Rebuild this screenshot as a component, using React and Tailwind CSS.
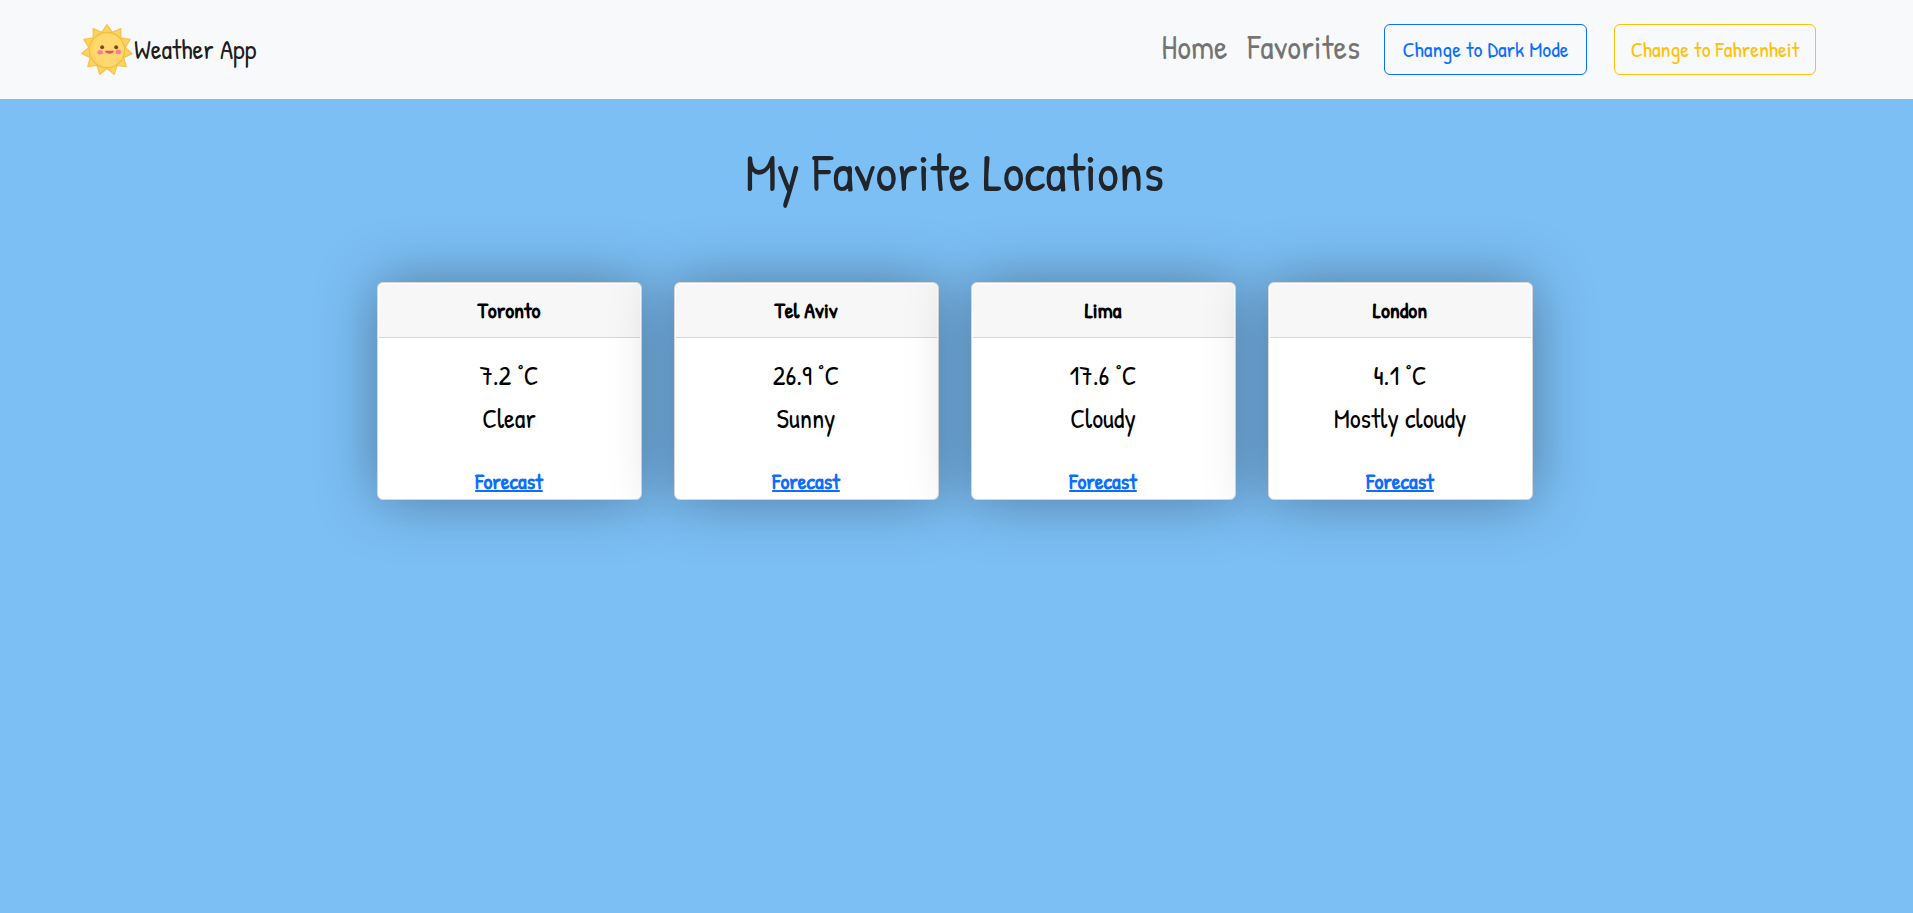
const locations = [
  { city: "Toronto", temperature: "7.2", text: "Clear" },
  { city: "Tel Aviv", temperature: "26.9", text: "Sunny" },
  { city: "Lima", temperature: "17.6", text: "Cloudy" },
  { city: "London", temperature: "4.1", text: "Mostly cloudy" },
];

const SPIKES = 11;
const ring = (radius, offset) =>
  Array.from({ length: SPIKES }, (_, i) => {
    const a = ((i + offset) / SPIKES) * Math.PI * 2;
    return [50 + radius * Math.sin(a), 50 - radius * Math.cos(a)];
  });
const tips = ring(47, 0);
const valleys = ring(34, 0.5);
const rays = tips.map((t, i) => `${t.join(",")} ${valleys[i].join(",")}`).join(" ");

function SunLogo() {
  return (
    <svg viewBox="0 0 100 100" className="size-[54px]" aria-hidden="true">
      <polygon points={rays} fill="#fbd266" stroke="#f6c64c" strokeWidth="2.5" strokeLinejoin="round" />
      <circle cx="50" cy="50" r="32.5" fill="#ffd970" stroke="#f3bf40" strokeWidth="2.5" />
      <path d="M50 19a31 31 0 0 0 0 62 35 35 0 0 1-26-31 35 35 0 0 1 26-31Z" fill="#fdd362" />
      <circle cx="41" cy="45" r="3.6" fill="#7a4a1c" />
      <circle cx="67" cy="45" r="3.6" fill="#7a4a1c" />
      <ellipse cx="37.5" cy="54" rx="5" ry="4.2" fill="#fb7f95" />
      <ellipse cx="71" cy="53.5" rx="5" ry="4.2" fill="#fb7f95" />
      <path d="M46 51.5h17c-1 7.5-16 7.5-17 0Z" fill="#e8506a" />
    </svg>
  );
}

function LocationCard({ city, temperature, text }) {
  return (
    <article className="flex w-[265px] flex-col rounded-md border border-[#d6d6d6] bg-white p-px text-center text-black shadow-[0_0_60px_rgba(0,0,0,0.36)]">
      <h2 className="rounded-t border-b border-[#d6d6d6] bg-[#f7f7f7] py-3 text-[22px] leading-[29px] font-bold">{city}</h2>
      <div className="flex flex-col px-4 pt-4">
        <p className="text-[27px] leading-[43px]">{temperature} °C</p>
        <p className="text-[27px] leading-[43px]">{text}</p>
      </div>
      <a href="#forecast" className="mt-6 self-center text-[22px] leading-[34px] font-bold text-[#0d6efd] underline decoration-2">
        Forecast
      </a>
    </article>
  );
}

export default function App() {
  return (
    <div className="min-h-screen bg-[#7cbff5] font-['Patrick_Hand',cursive] text-[#212529]">
      <header className="flex h-[99px] items-center justify-between bg-[#f8f9fa] pr-[97px] pl-20">
        <a href="#home" className="flex items-center text-[27px] text-black/90">
          <SunLogo />
          Weather App
        </a>
        <nav className="flex items-center">
          <div className="mr-6 flex gap-5 pb-1.5 text-[34px] leading-[48px] text-black/55">
            <a href="#home">Home</a>
            <a href="#favorites">Favorites</a>
          </div>
          <button type="button" className="mr-[27px] h-[51px] w-[203px] rounded-md border border-[#0d6efd] text-[22px] text-[#0d6efd]">
            Change to Dark Mode
          </button>
          <button type="button" className="h-[51px] w-[202px] rounded-md border border-[#ffc107] text-[22px] text-[#ffc107]">
            Change to Fahrenheit
          </button>
        </nav>
      </header>
      <main className="flex flex-col items-center pt-10 pr-1">
        <h1 className="text-[54px] leading-[66px]">My Favorite Locations</h1>
        <section className="mt-[77px] flex flex-wrap justify-center gap-8">
          {locations.map((l) => (
            <LocationCard key={l.city} {...l} />
          ))}
        </section>
      </main>
    </div>
  );
}
